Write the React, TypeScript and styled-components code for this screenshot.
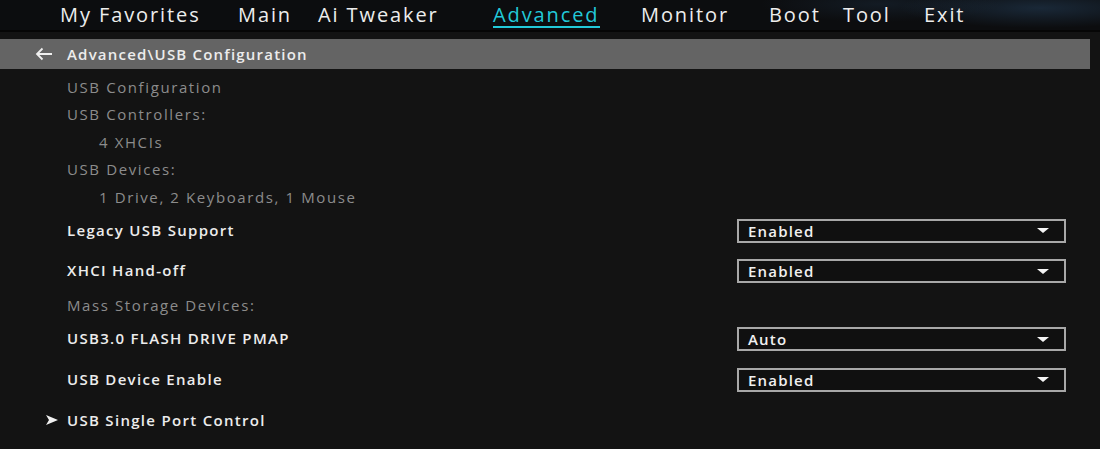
import React from 'react';
import styled, { createGlobalStyle } from 'styled-components';

const GlobalStyle = createGlobalStyle`
	html, body {
		margin: 0;
		padding: 0;
		background: #131313;
	}
	body {
		font-family: "Open Sans", "Noto Sans", sans-serif;
		color: #eaeaea;
	}
`;

const Page = styled.div`
	width: 1100px;
	height: 449px;
	overflow: hidden;
	background: #131313;
`;

const TopBar = styled.nav`
	height: 30px;
	display: flex;
	align-items: center;
	padding-left: 60px;
	background:
		radial-gradient(ellipse 140px 20px at 1040px 8px, rgba(60, 110, 160, 0.28), transparent),
		radial-gradient(ellipse 120px 18px at 880px 4px, rgba(50, 90, 130, 0.18), transparent),
		#0c0d0f;
	border-bottom: 2px solid #060606;
`;

const TabItem = styled.div<{ $w: number; $active?: boolean }>`
	width: ${(p) => p.$w}px;
	flex-shrink: 0;
	font-size: 20px;
	letter-spacing: 1.9px;
	line-height: 30px;
	white-space: nowrap;
	color: ${(p) => (p.$active ? '#22c9d9' : '#ededed')};

	span {
		display: inline-block;
		line-height: 22px;
		border-bottom: ${(p) => (p.$active ? '2px solid #22c9d9' : '2px solid transparent')};
		margin-top: 2px;
	}
`;

const Breadcrumb = styled.div`
	width: 1090px;
	height: 30px;
	margin-top: 7px;
	background: #646464;
	display: flex;
	align-items: center;
	font-size: 15px;
	font-weight: 600;
	letter-spacing: 1.2px;
	color: #ececec;
`;

const BackArrow = styled.svg`
	width: 18px;
	height: 14px;
	margin-left: 35px;
	margin-right: 14px;
`;

const Content = styled.div`
	padding-top: 4px;
	padding-left: 67px;
	padding-right: 34px;
`;

const InfoRow = styled.div<{ $indent?: boolean }>`
	height: 27.5px;
	display: flex;
	align-items: center;
	padding-left: ${(p) => (p.$indent ? 32 : 0)}px;
	font-size: 15px;
	letter-spacing: 1.6px;
	color: #8c8c8c;
	white-space: nowrap;
`;

const SettingRow = styled.div`
	height: 40.5px;
	display: flex;
	align-items: center;
	justify-content: space-between;
`;

const SettingLabel = styled.div`
	font-size: 15px;
	font-weight: 600;
	letter-spacing: 1.3px;
	color: #ececec;
	white-space: nowrap;
	margin-top: -2px;
`;

const Dropdown = styled.div`
	width: 329px;
	height: 24px;
	box-sizing: border-box;
	border: 2px solid #a8a8a8;
	background: #101010;
	display: flex;
	align-items: center;
	justify-content: space-between;
	padding: 0 15px 0 9px;
	font-size: 15px;
	font-weight: 600;
	letter-spacing: 1.2px;
	color: #f0f0f0;
`;

const Caret = styled.div`
	width: 0;
	height: 0;
	border-left: 6px solid transparent;
	border-right: 6px solid transparent;
	border-top: 5px solid #f4f4f4;
`;

const SubMenuRow = styled.div`
	height: 40px;
	display: flex;
	align-items: center;
	margin-left: -21px;
	font-size: 15px;
	font-weight: 600;
	letter-spacing: 1.3px;
	color: #ececec;
`;

const SubArrow = styled.svg`
	width: 12px;
	height: 10px;
	margin-right: 9px;
`;

const tabs = [
	{ label: 'My Favorites', w: 178 },
	{ label: 'Main', w: 80 },
	{ label: 'Ai Tweaker', w: 175 },
	{ label: 'Advanced', w: 148, active: true },
	{ label: 'Monitor', w: 128 },
	{ label: 'Boot', w: 74 },
	{ label: 'Tool', w: 81 },
	{ label: 'Exit', w: 80 },
];

const Setting = ({ label, value }: { label: string; value: string }) => (
	<SettingRow>
		<SettingLabel>{label}</SettingLabel>
		<Dropdown>
			{value}
			<Caret />
		</Dropdown>
	</SettingRow>
);

const App = () => {
	return (
		<Page>
			<GlobalStyle />
			<TopBar>
				{tabs.map((t) => (
					<TabItem key={t.label} $w={t.w} $active={t.active}>
						<span>{t.label}</span>
					</TabItem>
				))}
			</TopBar>
			<Breadcrumb>
				<BackArrow viewBox='0 0 18 14'>
					<path d='M17 7H2M7.5 1.5L2 7l5.5 5.5' stroke='#f0f0f0' strokeWidth='1.8' fill='none' />
				</BackArrow>
				Advanced\USB Configuration
			</Breadcrumb>
			<Content>
				<InfoRow>USB Configuration</InfoRow>
				<InfoRow>USB Controllers:</InfoRow>
				<InfoRow $indent>4 XHCIs</InfoRow>
				<InfoRow>USB Devices:</InfoRow>
				<InfoRow $indent>1 Drive, 2 Keyboards, 1 Mouse</InfoRow>
				<Setting label='Legacy USB Support' value='Enabled' />
				<Setting label='XHCI Hand-off' value='Enabled' />
				<InfoRow>Mass Storage Devices:</InfoRow>
				<Setting label='USB3.0 FLASH DRIVE PMAP' value='Auto' />
				<Setting label='USB Device Enable' value='Enabled' />
				<SubMenuRow>
					<SubArrow viewBox='0 0 12 10'>
						<path d='M0 0L12 5L0 10L3 5Z' fill='#f0f0f0' />
					</SubArrow>
					USB Single Port Control
				</SubMenuRow>
			</Content>
		</Page>
	);
};

export default App;
